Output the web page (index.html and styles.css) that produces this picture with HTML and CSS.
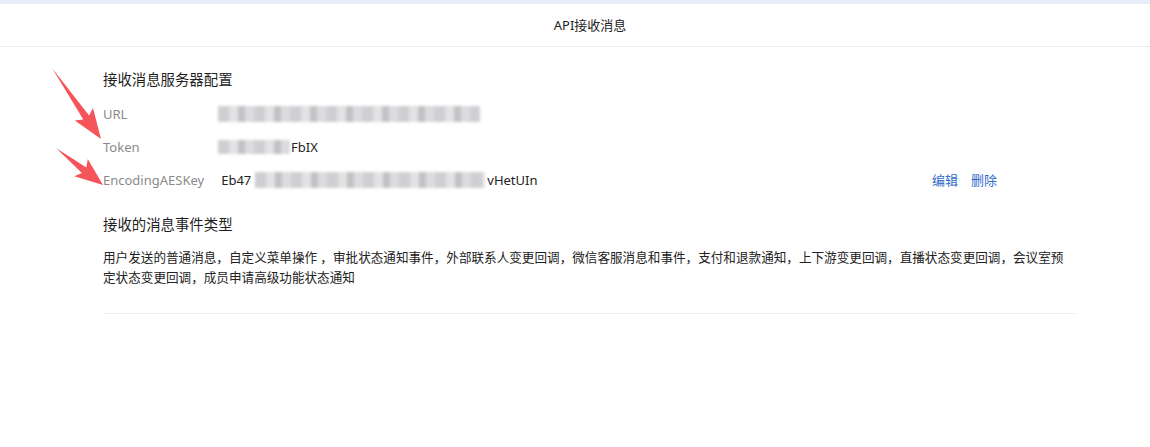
FILE: index.html
```html
<!DOCTYPE html>
<html lang="zh-CN">
<head>
<meta charset="utf-8">
<title>API接收消息</title>
<link rel="stylesheet" href="styles.css">
</head>
<body>
<div class="topstrip"></div>
<header class="header">API接收消息</header>
<main class="main">
  <section class="config">
    <h2 class="heading">接收消息服务器配置</h2>
    <div class="row">
      <span class="label">URL</span>
      <span class="value"><span class="blur b-url"></span></span>
    </div>
    <div class="row">
      <span class="label">Token</span>
      <span class="value"><span class="blur b-token"></span><span class="txt">FbIX</span></span>
    </div>
    <div class="row">
      <span class="label">EncodingAESKey</span>
      <span class="value"><span class="txt">Eb47</span><span class="blur b-key"></span><span class="txt">vHetUIn</span></span>
      <span class="actions"><a class="link">编辑</a><a class="link">删除</a></span>
    </div>
    <h2 class="heading heading2">接收的消息事件类型</h2>
    <p class="desc">用户发送的普通消息，自定义菜单操作 ，审批状态通知事件，外部联系人变更回调，微信客服消息和事件，支付和退款通知，上下游变更回调，直播状态变更回调，会议室预定状态变更回调，成员申请高级功能状态通知</p>
    <div class="divider"></div>
  </section>
</main>
<svg class="arrows" width="1150" height="447" viewBox="0 0 1150 447">
  <polygon fill="#f4545a" points="52,68 89.1,115.5 93,107.9 101,139 74.8,120.5 83.3,119.5"/>
  <polygon fill="#f4545a" points="56,148 86.3,167.4 87.8,159 103,185 74.2,176.2 81.9,172.9"/>
</svg>
</body>
</html>
```
FILE: styles.css
```css
* { box-sizing: border-box; }
html, body { margin: 0; padding: 0; background: #fff; }
body {
  font-family: "Noto Sans", "Noto Sans CJK SC", sans-serif;
  font-size: 13px;
  color: #222;
  width: 1150px;
  height: 447px;
  overflow: hidden;
  position: relative;
}
.topstrip { height: 4px; background: #e7eefa; }
.header {
  height: 43px;
  border-bottom: 1px solid #ebebeb;
  display: flex;
  align-items: center;
  justify-content: center;
  color: #222;
  font-size: 13px;
  padding: 0 0 1px 30px;
}
.main { padding: 23px 75px 0 103px; }
.heading {
  margin: 0;
  font-size: 14.4px;
  font-weight: normal;
  line-height: 20px;
  color: #1f1f1f;
}
.config > .heading:first-child { margin-bottom: 7px; }
.row {
  display: flex;
  align-items: center;
  height: 33px;
}
.label {
  flex: 0 0 auto;
  min-width: 115px;
  padding-right: 17px;
  color: #8a8a8a;
}
.value {
  flex: 1;
  display: flex;
  align-items: center;
  color: #222;
}
.blur {
  display: inline-block;
  height: 14px;
  filter: blur(1.6px);
  background: repeating-linear-gradient(90deg, #cfcfd2 0 11px, #e2e2e4 11px 20px, #c4c1c3 20px 27px, #dadcdf 27px 36px);
}
.b-url { width: 262px; height: 16px; }
.b-token { width: 72px; height: 14px; margin-right: 1px; }
.b-key { width: 230px; height: 16px; margin: 0 2px 0 4px; }
.actions {
  display: flex;
  gap: 13px;
  margin-right: 78px;
}
.link { color: #2f6bc8; cursor: pointer; }
.heading2 { margin-top: 19px; }
.desc {
  margin: 13px 0 0;
  font-size: 12.6px;
  line-height: 20px;
  color: #222;
}
.divider {
  margin-top: 25px;
  height: 1px;
  background: #ececec;
}
.arrows { position: absolute; left: 0; top: 0; pointer-events: none; }
```
